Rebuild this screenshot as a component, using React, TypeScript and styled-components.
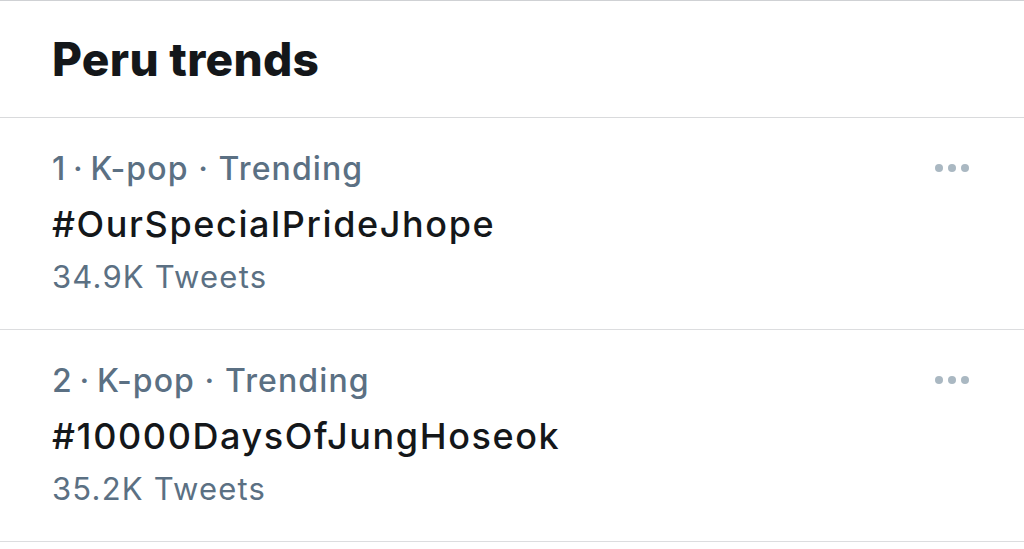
import React from "react";
import styled, { createGlobalStyle } from "styled-components";

const Global = createGlobalStyle`
  html, body { margin: 0; padding: 0; background: #ffffff; }
  body { font-family: Inter, "Noto Sans", "Liberation Sans", sans-serif; -webkit-font-smoothing: antialiased; }
`;

const Page = styled.div`
  width: 1024px;
  height: 549px;
  overflow: hidden;
  background: #ffffff;
  border-top: 1px solid #cfd1d4;
  box-sizing: border-box;
`;

const Header = styled.header`
  height: 116px;
  padding-left: 52px;
  border-bottom: 1px solid #d9dadc;
`;

const Title = styled.h1`
  margin: 0;
  font-size: 46px;
  line-height: 116px;
  font-weight: 800;
  color: #14171a;
  letter-spacing: 0.3px;
`;

const Row = styled.div`
  display: flex;
  justify-content: space-between;
  align-items: flex-start;
  height: 212px;
  box-sizing: border-box;
  padding: 25px 55px 0 52px;
  border-bottom: 1px solid #dcdddf;
`;

const Info = styled.div`
  display: flex;
  flex-direction: column;
`;

const Meta = styled.div`
  font-size: 32px;
  line-height: 52px;
  font-weight: 500;
  color: #5b7083;
  letter-spacing: 1.1px;
  white-space: nowrap;
`;

const Tag = styled.div`
  font-size: 36px;
  line-height: 58px;
  font-weight: 500;
  color: #14171a;
  letter-spacing: 1.6px;
  white-space: nowrap;
`;

const Count = styled.div`
  font-size: 31px;
  line-height: 48px;
  font-weight: 400;
  color: #5b7083;
  letter-spacing: 1.2px;
  white-space: nowrap;
`;

const More = styled.div`
  display: flex;
  gap: 5px;
  margin-top: 21px;
`;

const Dot = styled.span`
  width: 8px;
  height: 8px;
  border-radius: 50%;
  background: #aab8c2;
`;

const trends = [
  { rank: 1, cat: "K-pop", tag: "#OurSpecialPrideJhope", count: "34.9K Tweets" },
  { rank: 2, cat: "K-pop", tag: "#10000DaysOfJungHoseok", count: "35.2K Tweets" },
];

export default function App() {
  return (
    <>
      <Global />
      <Page>
        <Header>
          <Title>Peru trends</Title>
        </Header>
        {trends.map((t) => (
          <Row key={t.rank}>
            <Info>
              <Meta>{`${t.rank}\u2009·\u2009${t.cat} · Trending`}</Meta>
              <Tag>{t.tag}</Tag>
              <Count>{t.count}</Count>
            </Info>
            <More>
              <Dot />
              <Dot />
              <Dot />
            </More>
          </Row>
        ))}
      </Page>
    </>
  );
}
